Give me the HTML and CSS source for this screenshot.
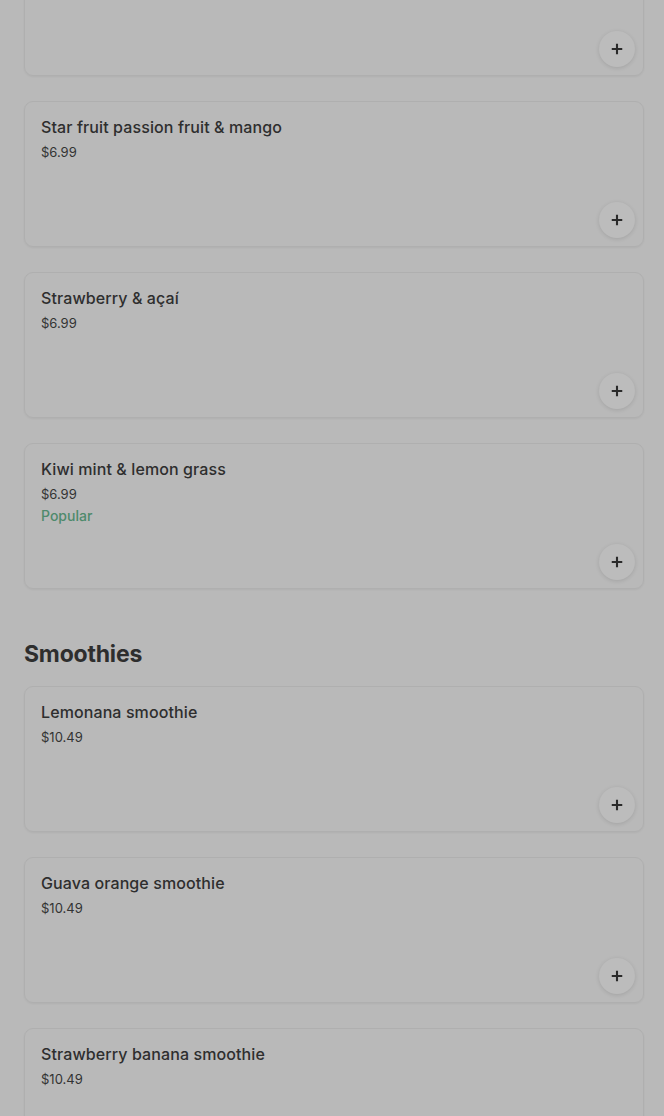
FILE: index.html
```html
<!DOCTYPE html>
<html>
<head>
<meta charset="utf-8">
<link rel="stylesheet" href="styles.css">
</head>
<body>
<div class="page">
  <div class="list">
    <div class="card card-first">
      <div class="info"></div>
      <button class="add"><svg viewBox="0 0 16 16" width="14" height="14"><path d="M8 2v12M2 8h12" stroke="#2a2a2a" stroke-width="2.4"/></svg></button>
    </div>
    <div class="card">
      <div class="info">
        <div class="title">Star fruit passion fruit &amp; mango</div>
        <div class="price">$6.99</div>
      </div>
      <button class="add"><svg viewBox="0 0 16 16" width="14" height="14"><path d="M8 2v12M2 8h12" stroke="#2a2a2a" stroke-width="2.4"/></svg></button>
    </div>
    <div class="card">
      <div class="info">
        <div class="title">Strawberry &amp; açaí</div>
        <div class="price">$6.99</div>
      </div>
      <button class="add"><svg viewBox="0 0 16 16" width="14" height="14"><path d="M8 2v12M2 8h12" stroke="#2a2a2a" stroke-width="2.4"/></svg></button>
    </div>
    <div class="card">
      <div class="info">
        <div class="title">Kiwi mint &amp; lemon grass</div>
        <div class="price">$6.99</div>
        <div class="tag">Popular</div>
      </div>
      <button class="add"><svg viewBox="0 0 16 16" width="14" height="14"><path d="M8 2v12M2 8h12" stroke="#2a2a2a" stroke-width="2.4"/></svg></button>
    </div>
  </div>

  <h2 class="section">Smoothies</h2>
  <div class="list">
    <div class="card">
      <div class="info">
        <div class="title">Lemonana smoothie</div>
        <div class="price">$10.49</div>
      </div>
      <button class="add"><svg viewBox="0 0 16 16" width="14" height="14"><path d="M8 2v12M2 8h12" stroke="#2a2a2a" stroke-width="2.4"/></svg></button>
    </div>
    <div class="card">
      <div class="info">
        <div class="title">Guava orange smoothie</div>
        <div class="price">$10.49</div>
      </div>
      <button class="add"><svg viewBox="0 0 16 16" width="14" height="14"><path d="M8 2v12M2 8h12" stroke="#2a2a2a" stroke-width="2.4"/></svg></button>
    </div>
    <div class="card">
      <div class="info">
        <div class="title">Strawberry banana smoothie</div>
        <div class="price">$10.49</div>
      </div>
      <button class="add"><svg viewBox="0 0 16 16" width="14" height="14"><path d="M8 2v12M2 8h12" stroke="#2a2a2a" stroke-width="2.4"/></svg></button>
    </div>
  </div>
</div>
</body>
</html>
```
FILE: styles.css
```css
html, body {
  margin: 0;
  padding: 0;
  background: #b9b9b9;
  overflow: hidden;
}
body {
  font-family: Inter, "Noto Sans", sans-serif;
  color: #2e2e2e;
  height: 1116px;
}
.page {
  padding: 0 20px 0 24px;
}
.list {
  display: flex;
  flex-direction: column;
  gap: 25px;
}
.card {
  box-sizing: border-box;
  height: 146px;
  border: 1px solid #afafaf;
  border-radius: 9px;
  padding: 15px 8px 8px 16px;
  display: flex;
  justify-content: space-between;
  align-items: flex-end;
  box-shadow: 0 1px 2px rgba(0,0,0,0.05);
}
.card-first {
  margin-top: -70px;
}
.info {
  align-self: flex-start;
}
.title {
  font-size: 16px;
  font-weight: 500;
  line-height: 20px;
  letter-spacing: 0.1px;
  color: #2e2e2e;
}
.price {
  font-size: 13px;
  line-height: 18px;
  margin-top: 6px;
  color: #333;
}
.tag {
  font-size: 14px;
  font-weight: 500;
  line-height: 18px;
  margin-top: 4px;
  color: #4e8a6c;
}
.add {
  width: 36px;
  height: 36px;
  border-radius: 50%;
  border: none;
  background: #bcbcbc;
  box-shadow: 0 1px 4px rgba(0,0,0,0.12);
  display: flex;
  align-items: center;
  justify-content: center;
  padding: 0;
}
.section {
  margin: 50px 0 17px;
  font-size: 23px;
  font-weight: 700;
  line-height: 30px;
  letter-spacing: -0.2px;
  color: #2e2e2e;
}
```
